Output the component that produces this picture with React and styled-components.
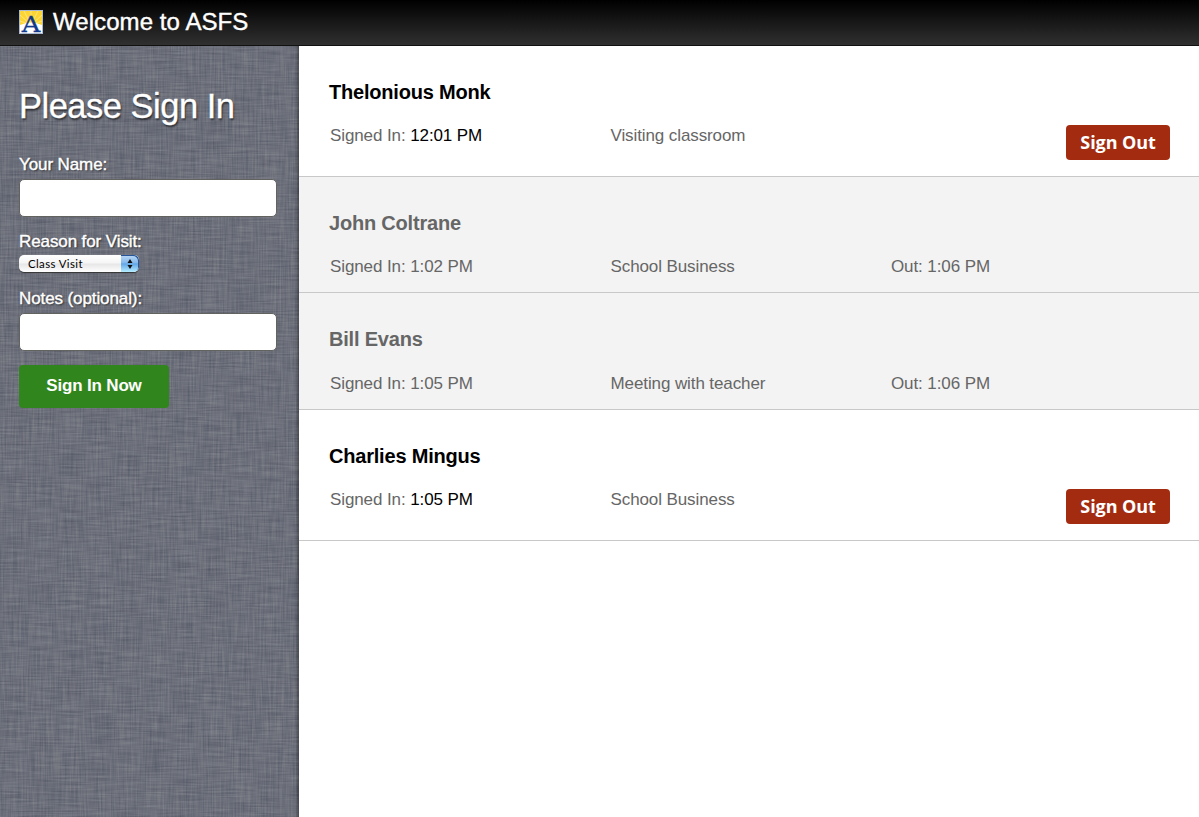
import React from 'react';
import styled, { createGlobalStyle } from 'styled-components';

const GlobalStyle = createGlobalStyle`
  *, *::before, *::after { box-sizing: border-box; }
  body {
    margin: 0;
    background: #fff;
    font-family: 'Liberation Sans', Arial, sans-serif;
  }
`;

const Page = styled.div`
  display: flex;
  flex-direction: column;
  height: 100vh;
  overflow: hidden;
`;

const Header = styled.header`
  display: flex;
  align-items: center;
  flex: none;
  gap: 10px;
  height: 46px;
  padding: 0 19px 2px;
  background: linear-gradient(#000, #303030);
  border-bottom: 1px solid #111;
`;

const Logo = styled.svg`
  display: block;
  flex: none;
  overflow: visible;
`;

const LogoLetter = styled.text`
  fill: #12398c;
  stroke: #12398c;
  stroke-width: 0.3px;
  font: 23px 'DejaVu Serif', serif;
  text-anchor: middle;
`;

const SiteTitle = styled.h1`
  margin: 0;
  color: #fff;
  font-size: 24px;
  font-weight: 400;
  line-height: 28px;
  letter-spacing: 0.07px;
  white-space: nowrap;
  -webkit-text-stroke: 0.4px #fff;
`;

const Body = styled.div`
  display: flex;
  flex: 1;
  min-height: 0;
`;

const Sidebar = styled.aside`
  position: relative;
  flex: none;
  width: 299px;
  background: #6c707b;
`;

const Fabric = styled.svg`
  position: absolute;
  inset: 0;
  width: 100%;
  height: 100%;
`;

const SignInForm = styled.form`
  position: relative;
  display: flex;
  flex-direction: column;
  align-items: flex-start;
  height: 100%;
  padding: 40px 19px 0;
  color: #fff;
  box-shadow: inset -4px 0 3px -2px rgba(0, 0, 0, 0.35);
`;

const FormTitle = styled.h2`
  margin: 0 0 29px;
  font-size: 34.5px;
  font-weight: 400;
  line-height: 40px;
  letter-spacing: -0.5px;
  text-shadow: 1px 2px 2px rgba(0, 0, 0, 0.6);
  white-space: nowrap;
  -webkit-text-stroke: 0.3px #fff;
`;

const Label = styled.label`
  font-size: 17px;
  line-height: 20px;
  letter-spacing: -0.1px;
  margin-bottom: ${({ $gap }) => $gap}px;
  text-shadow: 1px 1px 2px rgba(0, 0, 0, 0.7);
  -webkit-text-stroke: 0.4px #fff;
`;

const TextInput = styled.input`
  width: 258px;
  height: 38px;
  margin: 0 0 ${({ $below }) => $below}px;
  padding: 0 10px;
  font: 17px 'Liberation Sans', Arial, sans-serif;
  background: #fff;
  border: 1px solid #62625f;
  border-radius: 5px;
  outline: none;
`;

const Select = styled.button`
  display: flex;
  justify-content: space-between;
  width: 120px;
  height: 17px;
  margin: 0 0 17px;
  padding: 0 0 0 9px;
  overflow: hidden;
  color: #000;
  font: 11.4px/17px 'Lucida Grande', Lato, sans-serif;
  letter-spacing: 0.4px;
  text-align: left;
  background: linear-gradient(#fff 0%, #f5f5f5 48%, #e6e6e6 52%, #fff 100%);
  border: 0;
  border-radius: 5px;
  box-shadow: 0 1px 1px #333;
`;

const Stepper = styled.span`
  display: flex;
  align-items: center;
  justify-content: center;
  width: 18px;
  height: 17px;
  background: linear-gradient(#bcd8f4 0%, #83b9ec 46%, #61a7e8 52%, #b5ecff 100%);
  border-radius: 0 5px 5px 0;
  box-shadow: inset -1px 1px 0 #275599;
`;

const SignInButton = styled.button`
  width: 150px;
  height: 43px;
  padding: 0 0 1px;
  color: #fff;
  font: bold 17px 'Liberation Sans', Arial, sans-serif;
  letter-spacing: -0.18px;
  background: #30861c;
  border: 0;
  border-radius: 4px;
`;

const VisitorList = styled.main`
  flex: 1;
  min-width: 0;
`;

const VisitorRow = styled.section`
  display: flex;
  flex-direction: column;
  height: ${({ $height }) => $height}px;
  padding: 34px 29px 0 30px;
  background: ${({ $out }) => ($out ? '#f3f3f3' : '#fff')};
  border-bottom: 1px solid #c8c8c8;
`;

const VisitorName = styled.h3`
  margin: 0;
  color: ${({ $out }) => ($out ? '#666' : '#000')};
  font-size: 20px;
  font-weight: 700;
  line-height: 24px;
  letter-spacing: -0.2px;
`;

const Details = styled.div`
  display: grid;
  grid-template-columns: 280.5px 280.5px 1fr;
  align-items: start;
  padding: ${({ $top }) => $top}px 0 0 1px;
  color: #666;
  font-size: 17px;
  line-height: 22px;
  letter-spacing: -0.1px;
  white-space: nowrap;
`;

const Time = styled.span`
  color: ${({ $out }) => ($out ? '#666' : '#000')};
`;

const SignOutButton = styled.button`
  justify-self: end;
  width: 104px;
  height: 35px;
  padding: 0 0 1px;
  color: #fff;
  font: bold 18px 'Open Sans', 'Noto Sans', sans-serif;
  letter-spacing: -0.1px;
  background: #a32c10;
  border: 0;
  border-radius: 4px;
`;

const visitors = [
  { name: 'Thelonious Monk', time: '12:01 PM', reason: 'Visiting classroom', height: 131, top: 21 },
  { name: 'John Coltrane', time: '1:02 PM', reason: 'School Business', out: '1:06 PM', height: 116, top: 21 },
  { name: 'Bill Evans', time: '1:05 PM', reason: 'Meeting with teacher', out: '1:06 PM', height: 117, top: 22 },
  { name: 'Charlies Mingus', time: '1:05 PM', reason: 'School Business', height: 131, top: 21 },
];

function LogoMark() {
  return (
    <Logo width="24" height="24" viewBox="0 0 24 24">
      <rect width="24" height="24" fill="#a9b9d3" />
      <rect x="1" y="1" width="22" height="22" fill="#fcd535" />
      <path
        d="M12 15L1 5M12 15L5 1M12 15V1M12 15L19 1M12 15L23 5M12 15L1 11M12 15L23 11"
        stroke="#ffea8a"
        strokeWidth="0.8"
      />
      <path d="M1 15Q12 10 23 15V23H1Z" fill="#fff" />
      <LogoLetter x="10.7" y="21.5" transform="scale(1.12 1)">A</LogoLetter>
    </Logo>
  );
}

function FabricTexture() {
  return (
    <Fabric aria-hidden="true">
      <filter id="weave" x="0" y="0" width="100%" height="100%" colorInterpolationFilters="sRGB">
        <feTurbulence type="fractalNoise" baseFrequency="0.035 0.6" numOctaves="2" seed="4" result="rawWeft" />
        <feColorMatrix
          in="rawWeft"
          values="0.28 0 0 0 0.285  0.28 0 0 0 0.298  0.24 0 0 0 0.36  0 0 0 0 1"
          result="weft"
        />
        <feTurbulence type="fractalNoise" baseFrequency="0.6 0.03" numOctaves="2" seed="9" result="rawWarp" />
        <feColorMatrix
          in="rawWarp"
          values="0.28 0 0 0 0.285  0.24 0 0 0 0.318  0.18 0 0 0 0.39  0 0 0 0 1"
          result="warp"
        />
        <feComposite in="weft" in2="warp" operator="arithmetic" k1="0" k2="0.5" k3="0.5" k4="0" />
      </filter>
      <rect width="100%" height="100%" filter="url(#weave)" />
    </Fabric>
  );
}

function Visitor({ name, time, reason, out, height, top }) {
  return (
    <VisitorRow $out={!!out} $height={height}>
      <VisitorName $out={!!out}>{name}</VisitorName>
      <Details $top={top}>
        <span>
          Signed In: <Time $out={!!out}>{time}</Time>
        </span>
        <span>{reason}</span>
        {out ? <span>Out: {out}</span> : <SignOutButton type="button">Sign Out</SignOutButton>}
      </Details>
    </VisitorRow>
  );
}

export default function App() {
  return (
    <Page>
      <GlobalStyle />
      <Header>
        <LogoMark />
        <SiteTitle>Welcome to ASFS</SiteTitle>
      </Header>
      <Body>
        <Sidebar>
          <FabricTexture />
          <SignInForm>
            <FormTitle>Please Sign In</FormTitle>
            <Label htmlFor="name" $gap={4}>Your Name:</Label>
            <TextInput id="name" $below={15} />
            <Label htmlFor="reason" $gap={3}>Reason for Visit:</Label>
            <Select id="reason" type="button">
              Class Visit
              <Stepper>
                <svg width="6" height="10" viewBox="0 0 6 10">
                  <path d="M3 0L5.5 4H0.5ZM3 10L0.5 6H5.5Z" fill="#111" />
                </svg>
              </Stepper>
            </Select>
            <Label htmlFor="notes" $gap={4}>Notes (optional):</Label>
            <TextInput id="notes" $below={14} />
            <SignInButton type="button">Sign In Now</SignInButton>
          </SignInForm>
        </Sidebar>
        <VisitorList>
          {visitors.map((visitor) => (
            <Visitor key={visitor.name} {...visitor} />
          ))}
        </VisitorList>
      </Body>
    </Page>
  );
}
